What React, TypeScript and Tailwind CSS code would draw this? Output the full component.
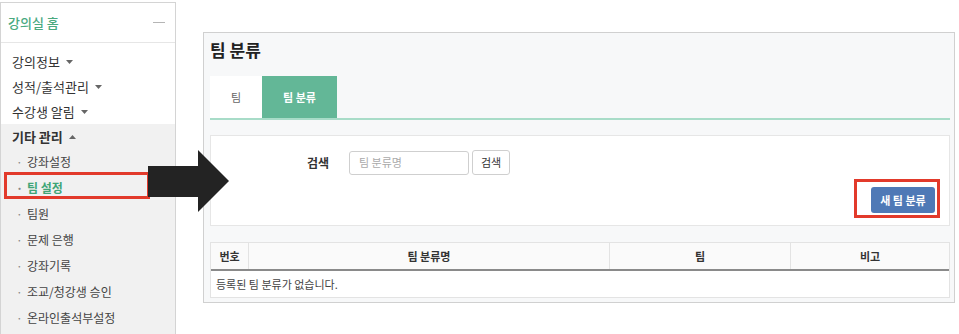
import { Fragment } from "react";

const TOP_MENU = ["강의정보", "성적/출석관리", "수강생 알림"];
const SUB_MENU = ["강좌설정", "팀 설정", "팀원", "문제 은행", "강좌기록", "조교/청강생 승인", "온라인출석부설정"];

function Caret({ up = false }: { up?: boolean }) {
  return (
    <svg width="7" height="4" viewBox="0 0 7 4" className="ml-[6px] mt-[1px]" aria-hidden="true">
      <polygon points={up ? "0,4 7,4 3.5,0" : "0,0 7,0 3.5,4"} fill="#666" />
    </svg>
  );
}

function Sidebar() {
  return (
    <aside className="relative mt-[2px] w-[176px] h-[340px] shrink-0 border border-[#d4d4d4] bg-white">
      <div className="h-[40px] flex items-center justify-between pl-[7px] pr-[10px] border-b border-[#e6e6e6]">
        <span className="text-[13px] text-[#4aa97f] font-medium">강의실 홈</span>
        <span className="w-[12px] h-px bg-[#b5b5b5]" />
      </div>
      <div className="pt-[6px]">
        {TOP_MENU.map((t) => (
          <div key={t} className="h-[25px] flex items-center pl-[11px] text-[13px] text-[#333]">
            {t}
            <Caret />
          </div>
        ))}
      </div>
      <div className="bg-[#f1f1f1] h-full">
        <div className="h-[25px] flex items-center pl-[11px] text-[13px] font-bold text-[#333]">
          기타 관리
          <Caret up />
        </div>
        {SUB_MENU.map((t) => (
          <div
            key={t}
            className={`h-[26px] flex items-center pl-[15px] text-[12px] ${
              t === "팀 설정" ? "text-[#3fa577] font-bold" : "text-[#444]"
            }`}
          >
            <span className="w-[11px] text-[#888]">·</span>
            {t}
          </div>
        ))}
      </div>
      {/* highlight around 팀 설정 */}
      <div className="absolute left-[3px] top-[169px] w-[146px] h-[27px] border-[3px] border-[#e23a2b]" />
    </aside>
  );
}

function SearchPanel() {
  return (
    <div className="mt-[15px] bg-white border border-[#e6e6e6] h-[91px]">
      <div className="flex items-center pl-[96px] pt-[14px]">
        <span className="w-[42px] text-[12px] font-bold text-[#333]">검색</span>
        <div className="w-[120px] h-[24px] border border-[#cfcfcf] rounded-[3px] flex items-center pl-[9px] text-[11px] text-[#aaa]">
          팀 분류명
        </div>
        <button className="ml-[3px] w-[38px] h-[25px] border border-[#cfcfcf] rounded-[3px] bg-white text-[11px] text-[#333]">
          검색
        </button>
      </div>
      <div className="flex justify-end pr-[14px] mt-[11px]">
        <div className="relative">
          <button className="w-[64px] h-[26px] rounded-[3px] bg-[#4f79b6] text-white text-[11px] font-bold">
            새 팀 분류
          </button>
          <div className="absolute -left-[17px] -right-[5px] -top-[7px] -bottom-[5px] border-[3px] border-[#e23a2b]" />
        </div>
      </div>
    </div>
  );
}

function TeamTable() {
  const cols = [
    { label: "번호", w: "w-[37px]" },
    { label: "팀 분류명", w: "w-[361px]" },
    { label: "팀", w: "w-[181px]" },
    { label: "비고", w: "flex-1" },
  ];
  return (
    <div className="mt-[16px] bg-white border border-[#e3e3e3]">
      <div className="flex h-[28px] bg-[#fafafa] border-b-2 border-[#8a8a8a]">
        {cols.map((c, i) => (
          <Fragment key={c.label}>
            <div
              className={`${c.w} flex items-center justify-center text-[11px] font-bold text-[#333] ${
                i > 0 ? "border-l border-[#e3e3e3]" : ""
              }`}
            >
              {c.label}
            </div>
          </Fragment>
        ))}
      </div>
      <div className="h-[26px] flex items-center pl-[5px] text-[11px] text-[#444]">
        등록된 팀 분류가 없습니다.
      </div>
    </div>
  );
}

export default function App() {
  return (
    <div className="relative w-[959px] h-[334px] overflow-hidden bg-white flex font-['Noto_Sans_CJK_KR','Noto_Sans',sans-serif]">
      <Sidebar />

      <main className="ml-[27px] mt-[32px] w-[752px] h-[271px] border border-[#d0d0d0] bg-[#f7f8f9] pl-[6px] pr-[4px] pt-[5px]">
        <h1 className="text-[17px] font-bold text-[#222] leading-[24px]">팀 분류</h1>

        <div className="mt-[14px] flex h-[42px] border-b-2 border-[#a8dcc8] box-content">
          <div className="w-[52px] bg-white flex items-center justify-center text-[11px] text-[#666]">팀</div>
          <div className="w-[75px] bg-[#63b797] flex items-center justify-center text-[11px] font-bold text-white">
            팀 분류
          </div>
        </div>

        <SearchPanel />
        <TeamTable />
      </main>

      {/* arrow pointing from menu to page */}
      <svg
        className="absolute left-[148px] top-[150px]"
        width="81"
        height="62"
        viewBox="0 0 81 62"
        aria-hidden="true"
      >
        <polygon points="0,16 50,16 50,0 81,31 50,62 50,47 0,47" fill="#232323" />
      </svg>
    </div>
  );
}
